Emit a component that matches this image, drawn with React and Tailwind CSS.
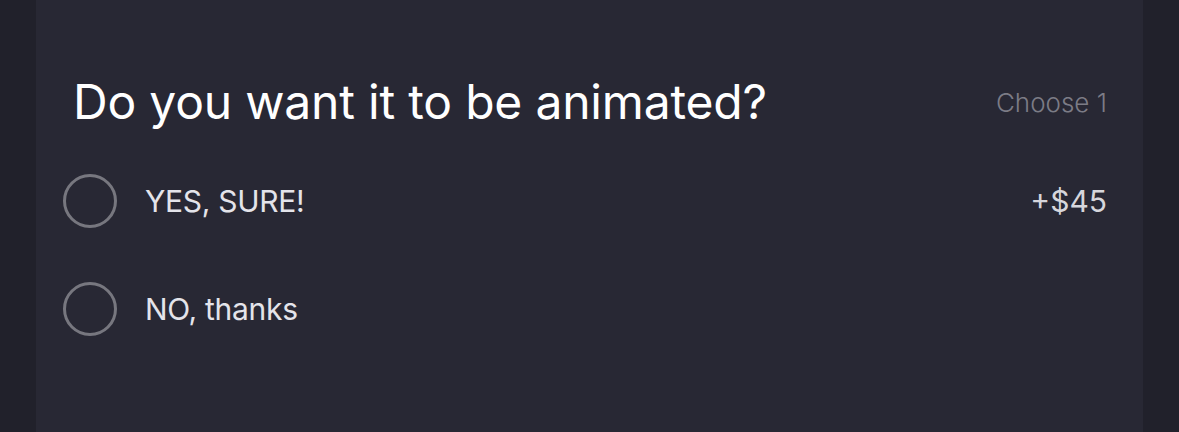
import React from 'react';

const options = [
  { label: 'YES, SURE!', price: '+$45' },
  { label: 'NO, thanks', price: null },
];

export default function App() {
  return (
    <div className="w-[1179px] h-[432px] bg-[#21212b] px-[36px] flex" style={{ fontFamily: 'Inter, "Noto Sans", sans-serif' }}>
      <div className="flex-1 bg-[#282834] pl-[27px] pr-[36px] pt-[73px]">
        <div className="flex items-center justify-between pl-[10px]">
          <h2 className="text-[48px] leading-[58px] text-white tracking-[-0.2px]">Do you want it to be animated?</h2>
          <span className="text-[26px] text-[#7c7c86] font-light">Choose 1</span>
        </div>
        <div className="mt-[43px] flex flex-col gap-[54px]">
          {options.map((o) => (
            <div key={o.label} className="flex items-center h-[54px]">
              <span className="w-[54px] h-[54px] rounded-full border-[3px] border-[#77777f]" />
              <span className="ml-[28px] text-[30px] text-[#e4e4ea] tracking-[-0.3px]">{o.label}</span>
              {o.price && <span className="ml-auto text-[30px] text-[#d6d6dc]">{o.price}</span>}
            </div>
          ))}
        </div>
      </div>
    </div>
  );
}
